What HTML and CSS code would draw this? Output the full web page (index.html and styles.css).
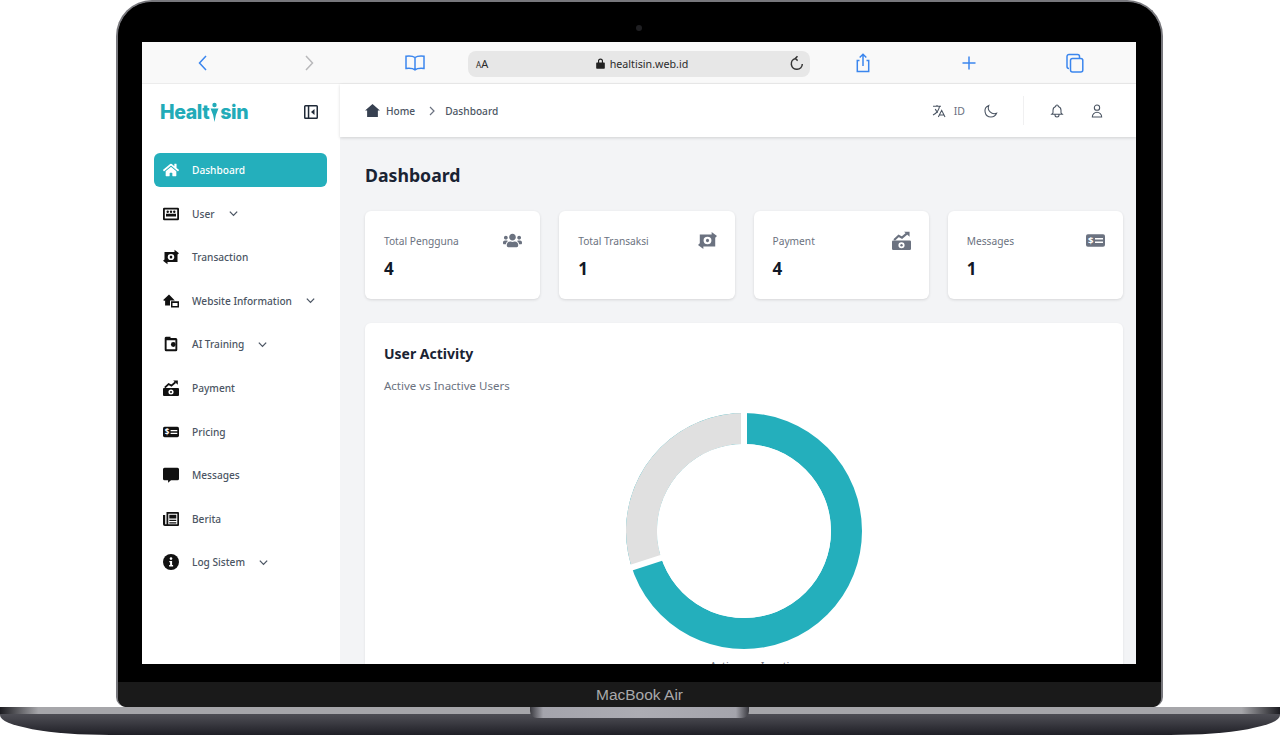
FILE: index.html
```html
<!DOCTYPE html>
<html lang="en">
<head>
    <meta charset="UTF-8">
    <meta name="viewport" content="width=device-width, initial-scale=1.0">
    <title>Healtisin Dashboard</title>
    <link rel="stylesheet" href="styles.css">
</head>
<body>
    <!-- shared icons -->
    <svg class="sprite" aria-hidden="true">
        <symbol id="i-home" viewBox="0 0 576 512"><path d="M280.37 148.26L96 300.11V464a16 16 0 0 0 16 16l112.06-.29a16 16 0 0 0 15.92-16V368a16 16 0 0 1 16-16h64a16 16 0 0 1 16 16v95.64a16 16 0 0 0 16 16.05L464 480a16 16 0 0 0 16-16V300L295.67 148.26a12.19 12.19 0 0 0-15.3 0zM571.6 251.47L488 182.56V44.05a12 12 0 0 0-12-12h-56a12 12 0 0 0-12 12v72.61L318.47 43a48 48 0 0 0-61 0L4.34 251.47a12 12 0 0 0-1.6 16.9l25.5 31A12 12 0 0 0 45.15 301l235.22-193.74a12.19 12.19 0 0 1 15.3 0L530.9 301a12 12 0 0 0 16.9-1.6l25.5-31a12 12 0 0 0-1.7-16.93z"/></symbol>
        <symbol id="i-users" viewBox="0 0 640 512"><path d="M96 224c35.3 0 64-28.7 64-64s-28.7-64-64-64-64 28.7-64 64 28.7 64 64 64zm448 0c35.3 0 64-28.7 64-64s-28.7-64-64-64-64 28.7-64 64 28.7 64 64 64zm32 32h-64c-17.6 0-33.5 7.1-45.1 18.6 40.3 22.1 68.9 62 75.1 109.4h66c17.7 0 32-14.3 32-32v-32c0-35.3-28.7-64-64-64zm-256 0c61.9 0 112-50.1 112-112S381.9 32 320 32 208 82.1 208 144s50.1 112 112 112zm76.8 32h-8.3c-20.8 10-43.9 16-68.5 16s-47.6-6-68.5-16h-8.3C179.6 288 128 339.6 128 403.2V432c0 26.5 21.5 48 48 48h288c26.5 0 48-21.5 48-48v-28.8c0-63.6-51.6-115.2-115.2-115.2zm-223.7-13.4C161.5 263.1 145.6 256 128 256H64c-35.3 0-64 28.7-64 64v32c0 17.7 14.3 32 32 32h65.9c6.3-47.4 34.9-87.3 75.2-109.4z"/></symbol>
        <symbol id="i-roster" viewBox="0 0 16 16"><path fill-rule="evenodd" d="M1.200 1.800h13.600A1.200 1.200 0 0 1 16 3v10a1.200 1.200 0 0 1-1.200 1.200H1.200A1.200 1.200 0 0 1 0 13V3a1.200 1.200 0 0 1 1.200-1.200zm.6 1.800v8.800h12.400V3.600z"/><circle cx="4.700" cy="5.800" r="1.200"/><circle cx="8" cy="5.800" r="1.200"/><circle cx="11.300" cy="5.800" r="1.200"/><path d="M3 7.800h10v2.800H3z"/></symbol>
        <symbol id="i-transfer" viewBox="0 0 16 16"><path fill-rule="evenodd" d="M1.500 3h10V.8L16 4.300l-1.500 1.300V13h-10v2.200L0 11.700l1.500-1.300zM8 4.900a3.300 3.100 0 1 0 0 6.200 3.300 3.100 0 0 0 0-6.200z"/><ellipse cx="8" cy="8" rx="1.300" ry="1.500"/></symbol>
        <symbol id="i-site" viewBox="0 0 16 16"><path fill-rule="evenodd" d="M6 1.500 .2 7l1 1 .9-.8V12.500H7V7.500h4.800zM8 8.300h8V14.500H8zm1.500 1.700v3h5v-3z"/></symbol>
        <symbol id="i-wallet" viewBox="0 0 16 16"><path fill-rule="evenodd" d="M3.500.8h4V2h5.300A1.500 1.500 0 0 1 14.300 3.500v10.200a1.500 1.500 0 0 1-1.500 1.500H3.200a1.500 1.500 0 0 1-1.500-1.500V2.300A1.500 1.500 0 0 1 3.500.8zM3.600 4.200v9.100h8.800V4.200z"/><circle cx="10.300" cy="8.500" r="2.400"/></symbol>
        <symbol id="i-growth" viewBox="0 0 16 16"><path d="M1.800 7.600 5.600 4l2.800 1.600 4-3.400" fill="none" stroke="currentColor" stroke-width="1.800"/><path d="M10.200.6h4.600v4.200z"/><path fill-rule="evenodd" d="M1 8h14a1 1 0 0 1 1 1v6a1 1 0 0 1-1 1H1a1 1 0 0 1-1-1V9a1 1 0 0 1 1-1zm7 1.500a2.600 2.500 0 1 0 0 5 2.600 2.500 0 0 0 0-5z"/><circle cx="8" cy="12" r="1"/></symbol>
        <symbol id="i-bill" viewBox="0 0 16 16"><rect y="2.800" width="16" height="10.400" rx="1.600"/><text x="1.700" y="10.800" class="bill-sign">$</text><path d="M7.600 5.900h6.700v1.300H7.600zm0 2.900h6.700v1.300H7.600z" fill="#fff"/></symbol>
        <symbol id="i-message" viewBox="0 0 16 16"><path d="M1.500.8h13A1.500 1.500 0 0 1 16 2.300v9.400a1.500 1.500 0 0 1-1.500 1.500H8l-2.900 2.600v-2.600H1.500A1.500 1.500 0 0 1 0 11.700V2.300A1.500 1.500 0 0 1 1.500.8z"/></symbol>
        <symbol id="i-news" viewBox="0 0 16 16"><path fill-rule="evenodd" d="M3.500 1H15a1 1 0 0 1 1 1v12a1 1 0 0 1-1 1H1.800A1.800 1.800 0 0 1 0 13.200V4h2.200v9.200h1.300zM5.300 2.800v10.400h9V2.800z"/><path d="M6.300 3.800h7v3.700h-7zm0 4.900h7V10h-7zm0 2.500h7v1.200h-7z"/></symbol>
        <symbol id="i-info" viewBox="0 0 16 16"><circle cx="8" cy="8" r="8"/><circle cx="8" cy="4.600" r="1.300" fill="#fff"/><path d="M6.300 6.900h2.800v4.200h1v1.300H6.100v-1.300h1V8.200h-.8z" fill="#fff"/></symbol>
        <symbol id="i-chevron" viewBox="0 0 12 12"><path d="M2 4l4 4 4-4" fill="none" stroke="currentColor" stroke-width="1.400"/></symbol>
    </svg>

    <div class="lid">
        <div class="bezel">
            <div class="camera"></div>
            <div class="screen">
                <div class="safari">
                    <div class="slot"><svg class="tool" viewBox="0 0 20 20"><path d="M13 3 6.500 10l6.500 7"/></svg></div>
                    <div class="slot slot-off"><svg class="tool" viewBox="0 0 20 20"><path d="M7 3l6.500 7L7 17"/></svg></div>
                    <div class="slot"><svg class="tool tool-wide" viewBox="0 0 20 18"><path d="M10 3.500C8 2 5 1.800 1 2.200v12.300c4-.4 7-.2 9 1.300 2-1.500 5-1.700 9-1.300V2.200C15 1.800 12 2 10 3.500zm0 0v12.300"/></svg></div>
                    <div class="url">
                        <span class="url-aa"><small>A</small>A</span>
                        <span class="url-site">
                            <svg class="lock" viewBox="0 0 10 12"><path d="M2.200 5V3.300a2.800 2.800 0 0 1 5.600 0V5H9a.8.8 0 0 1 .8.800v5.200a.8.8 0 0 1-.8.800H1a.8.8 0 0 1-.8-.8V5.800A.8.8 0 0 1 1 5zm1.300 0h3V3.300a1.500 1.500 0 0 0-3 0z"/></svg>
                            healtisin.web.id
                        </span>
                        <svg class="reload" viewBox="0 0 16 16"><path d="M8.500.8 6.300 3l2.400 2.100M6.500 3a5.500 5.500 0 1 0 6.800 5.500"/></svg>
                    </div>
                    <div class="slot"><svg class="tool" viewBox="0 0 20 20"><path d="M6.500 7.500H4.300v11h11.400v-11h-2.200M10 13V1.500M6.700 4.500 10 1.300l3.300 3.200"/></svg></div>
                    <div class="slot"><svg class="tool" viewBox="0 0 20 20"><path d="M10 3.500v13M3.500 10h13"/></svg></div>
                    <div class="slot"><svg class="tool" viewBox="0 0 20 20"><path d="M7.500 5.500h8.300a2 2 0 0 1 2 2V17a2 2 0 0 1-2 2H7.500a2 2 0 0 1-2-2V7.500a2 2 0 0 1 2-2zM4 15.500a2 2 0 0 1-2-2V3.500a2 2 0 0 1 2-2h8.500a2 2 0 0 1 2 2v2"/></svg></div>
                </div>

                <div class="app">
                    <aside class="sidebar">
                        <div class="brand">
                            <div class="logo">Healt<svg class="logo-i" viewBox="0 0 8 20"><circle cx="4" cy="3" r="2.200"/><path d="M0 6.500h8L5.400 13 4 20 2.600 13z"/></svg>sin</div>
                            <svg class="collapse" viewBox="0 0 14 14"><path fill-rule="evenodd" d="M1.500 0h11A1.500 1.500 0 0 1 14 1.500v11a1.500 1.500 0 0 1-1.500 1.500h-11A1.500 1.500 0 0 1 0 12.500v-11A1.500 1.500 0 0 1 1.500 0zm0 1.500v11h2.300v-11zm3.800 0v11h7.200v-11z"/><path d="M10.500 4v6L7 7z"/></svg>
                        </div>
                        <nav class="menu">
                            <a class="item item-active"><svg class="ico"><use href="#i-home"/></svg>Dashboard</a>
                            <a class="item"><svg class="ico"><use href="#i-roster"/></svg>User<svg class="caret"><use href="#i-chevron"/></svg></a>
                            <a class="item"><svg class="ico"><use href="#i-transfer"/></svg>Transaction</a>
                            <a class="item"><svg class="ico"><use href="#i-site"/></svg>Website Information<svg class="caret"><use href="#i-chevron"/></svg></a>
                            <a class="item"><svg class="ico"><use href="#i-wallet"/></svg>AI Training<svg class="caret"><use href="#i-chevron"/></svg></a>
                            <a class="item"><svg class="ico"><use href="#i-growth"/></svg>Payment</a>
                            <a class="item"><svg class="ico"><use href="#i-bill"/></svg>Pricing</a>
                            <a class="item"><svg class="ico"><use href="#i-message"/></svg>Messages</a>
                            <a class="item"><svg class="ico"><use href="#i-news"/></svg>Berita</a>
                            <a class="item"><svg class="ico"><use href="#i-info"/></svg>Log Sistem<svg class="caret"><use href="#i-chevron"/></svg></a>
                        </nav>
                    </aside>

                    <div class="main">
                        <header class="topbar">
                            <div class="crumbs">
                                <svg class="crumb-home" viewBox="0 0 16 14"><path d="M8 0 0 7h2.200v7h11.600V7H16z"/></svg>
                                <span class="crumb-first">Home</span>
                                <svg class="crumb-sep" viewBox="0 0 8 10"><path d="M2 1l4 4-4 4"/></svg>
                                <span>Dashboard</span>
                            </div>
                            <div class="actions">
                                <svg class="act" viewBox="0 0 24 24"><path d="M3 5h12M9 3v2m1.048 9.500A18.022 18.022 0 016.412 9m6.088 9h7M11 21l5-10 5 10M12.751 5C11.783 10.770 8.070 15.610 3 18.129"/></svg>
                                <span class="lang">ID</span>
                                <svg class="act act-moon" viewBox="0 0 24 24"><path d="M20.354 15.354A9 9 0 018.646 3.646 9.003 9.003 0 0012 21a9.003 9.003 0 008.354-5.646z"/></svg>
                                <span class="act-line"></span>
                                <svg class="act" viewBox="0 0 24 24"><path d="M15 17h5l-1.405-1.405A2.032 2.032 0 0118 14.158V11a6.002 6.002 0 00-4-5.659V5a2 2 0 10-4 0v.341C7.670 6.165 6 8.388 6 11v3.159c0 .538-.214 1.055-.595 1.436L4 17h5m6 0v1a3 3 0 11-6 0v-1m6 0H9"/></svg>
                                <svg class="act act-user" viewBox="0 0 24 24"><path d="M16 7a4 4 0 11-8 0 4 4 0 018 0zM12 14a7 7 0 00-7 7h14a7 7 0 00-7-7z"/></svg>
                            </div>
                        </header>

                        <div class="content">
                            <h1>Dashboard</h1>
                            <div class="stats">
                                <div class="stat">
                                    <div class="stat-top"><span>Total Pengguna</span><svg class="stat-ico"><use href="#i-users"/></svg></div>
                                    <div class="stat-num">4</div>
                                </div>
                                <div class="stat">
                                    <div class="stat-top"><span>Total Transaksi</span><svg class="stat-ico"><use href="#i-transfer"/></svg></div>
                                    <div class="stat-num">1</div>
                                </div>
                                <div class="stat">
                                    <div class="stat-top"><span>Payment</span><svg class="stat-ico"><use href="#i-growth"/></svg></div>
                                    <div class="stat-num">4</div>
                                </div>
                                <div class="stat">
                                    <div class="stat-top"><span>Messages</span><svg class="stat-ico"><use href="#i-bill"/></svg></div>
                                    <div class="stat-num">1</div>
                                </div>
                            </div>

                            <section class="activity">
                                <h2>User Activity</h2>
                                <p>Active vs Inactive Users</p>
                                <svg class="donut" viewBox="0 0 236 236">
                                    <circle cx="118" cy="118" r="102.500" class="ring-active"/>
                                    <circle cx="118" cy="118" r="102.500" class="ring-idle" pathLength="100" stroke-dasharray="30 70" transform="rotate(162 118 118)"/>
                                    <path d="M118 118V0M118 118 3 155.400" class="ring-gap"/>
                                    <circle cx="118" cy="118" r="87" class="ring-hole"/>
                                </svg>
                                <div class="legend"><span>Active</span><span>Inactive</span></div>
                            </section>
                        </div>
                    </div>
                </div>
            </div>
        </div>
        <div class="chin">MacBook Air</div>
    </div>

    <div class="base">
        <div class="base-strip"><div class="notch"></div></div>
    </div>
</body>
</html>
```

FILE: styles.css
```css
* {
    box-sizing: border-box;
}
html, body {
    margin: 0;
    height: 735px;
    overflow: hidden;
}
body {
    background: #fff;
    font-family: "Noto Sans", Arial, sans-serif;
    color: #111827;
}
.sprite {
    display: none;
}

/* laptop frame */
.lid {
    width: 1047px;
    height: 707px;
    margin-left: 116px;
    border: 2px solid #77777c;
    border-bottom: 0;
    border-radius: 36px 36px 10px 10px;
    background: #000;
    overflow: hidden;
    display: flex;
    flex-direction: column;
}
.bezel {
    flex: 1;
    padding: 40px 25px 18px 24px;
    background: #000;
    min-height: 0;
    display: flex;
    flex-direction: column;
}
.camera {
    width: 6px;
    height: 6px;
    margin: -17px auto 11px;
    border-radius: 50%;
    background: #1f1f22;
}
.screen {
    height: 622px;
    background: #fff;
    overflow: hidden;
    display: flex;
    flex-direction: column;
}
.chin {
    height: 25px;
    background: #1a1a1a;
    color: #a9a9ab;
    font-family: "Liberation Sans", Arial, sans-serif;
    font-size: 15.5px;
    line-height: 25px;
    text-align: center;
}
.base {
    height: 28px;
    background: linear-gradient(#5a5a61, #46464d 40%, #1f1f26);
    border-radius: 0 0 110px 110px / 0 0 20px 20px;
}
.base-strip {
    height: 7px;
    background:
        linear-gradient(90deg, rgba(20,20,25,.95), rgba(20,20,25,0) 3%, rgba(20,20,25,0) 97%, rgba(20,20,25,.95)),
        #a6a6aa;
    display: flex;
    justify-content: center;
}
.notch {
    width: 219px;
    height: 11px;
    margin-left: -1px;
    border-radius: 0 0 7px 7px;
    background: linear-gradient(90deg, #3a3a40, #a4a4ac 6%, #acacb3 50%, #a4a4ac 94%, #3a3a40);
}

/* browser toolbar */
.safari {
    height: 42px;
    flex: none;
    padding-left: 8px;
    background: #f9f9f9;
    border-bottom: 1px solid #ececec;
    display: grid;
    grid-template-columns: 106px 106px 106px 342px 106px 106px 106px;
    align-items: center;
}
.slot {
    display: flex;
    justify-content: center;
    color: #3b86ee;
}
.slot-off {
    color: #b9b9bb;
}
.tool {
    width: 20px;
    height: 20px;
    fill: none;
    stroke: currentColor;
    stroke-width: 1.5;
}
.tool-wide {
    height: 18px;
}
.url {
    height: 26px;
    margin-top: 2px;
    padding: 0 5px 0 8px;
    border-radius: 8px;
    background: #e7e7e7;
    color: #2b2b2b;
    font-size: 12px;
    display: flex;
    align-items: center;
    justify-content: space-between;
}
.url-aa {
    font-size: 11px;
    width: 14px;
}
.url-aa small {
    font-size: 8px;
}
.url-site {
    display: flex;
    align-items: center;
    gap: 5px;
    margin-left: 5px;
    font-size: 10.700px;
}
.lock {
    width: 9px;
    height: 11px;
    fill: #222;
}
.reload {
    width: 16px;
    height: 17px;
    fill: none;
    stroke: #333;
    stroke-width: 1.500;
}

/* app shell */
.app {
    flex: 1;
    min-height: 0;
    display: flex;
}
.sidebar {
    width: 198px;
    flex: none;
    padding: 0 13px 0 12px;
    background: #fff;
}
.brand {
    height: 56px;
    padding: 0 9px 0 6px;
    display: flex;
    align-items: center;
    justify-content: space-between;
}
.logo {
    color: #22abb8;
    font-family: Inter, sans-serif;
    font-size: 19.500px;
    font-weight: 800;
    letter-spacing: -.4px;
    display: flex;
    align-items: center;
}
.logo-i {
    width: 9px;
    height: 20px;
    margin: 0 1px;
    fill: #22abb8;
}
.collapse {
    width: 14px;
    height: 14px;
    fill: #1f2937;
}
.menu {
    margin-top: 13px;
    display: flex;
    flex-direction: column;
    gap: 9.600px;
}
.item {
    height: 34px;
    padding-left: 9px;
    border-radius: 6px;
    color: #4b5563;
    font-size: 10.150px;
    font-weight: 500;
    display: flex;
    align-items: center;
}
.item-active {
    background: #24afbc;
    color: #fff;
}
.ico {
    width: 16px;
    height: 16px;
    margin-right: 13px;
    color: #111;
    fill: currentColor;
}
.item-active .ico {
    color: #fff;
}
.caret {
    width: 11px;
    height: 11px;
    margin-left: 13px;
    color: #4b5563;
    fill: currentColor;
}
.bill-sign {
    font: 700 8px "Noto Sans", sans-serif;
    fill: #fff;
}

/* top bar */
.main {
    flex: 1;
    min-width: 0;
    background: #f3f4f6;
    display: flex;
    flex-direction: column;
}
.topbar {
    height: 53px;
    flex: none;
    padding: 0 31px 0 25px;
    background: #fff;
    box-shadow: 0 1px 3px rgba(0,0,0,.15);
    display: flex;
    align-items: center;
    justify-content: space-between;
}
.crumbs {
    color: #4b5563;
    font-size: 10.150px;
    font-weight: 500;
    display: flex;
    align-items: center;
}
.crumb-home {
    width: 15px;
    height: 13px;
    margin-right: 6px;
    fill: #374151;
}
.crumb-sep {
    width: 8px;
    height: 10px;
    margin: 0 9px 0 13px;
    fill: none;
    stroke: #6b7280;
    stroke-width: 1.200;
}
.actions {
    color: #4b5563;
    display: flex;
    align-items: center;
}
.act {
    width: 16px;
    height: 16px;
    fill: none;
    stroke: currentColor;
    stroke-width: 1.600;
}
.act-moon {
    margin-left: 18px;
}
.act-user {
    margin-left: 24px;
}
.lang {
    margin-left: 7px;
    font-size: 10.500px;
    color: #6b7280;
}
.act-line {
    width: 1px;
    height: 29px;
    margin: 0 25px 0 24px;
    background: #f0f0f1;
}

/* page body */
.content {
    flex: 1;
    min-height: 0;
    padding: 25px 13px 0 25px;
}
h1 {
    margin: 0;
    height: 26px;
    font-size: 17.700px;
    font-weight: 700;
    line-height: 26px;
    color: #1a2333;
}
.stats {
    margin-top: 23px;
    display: grid;
    grid-template-columns: repeat(4, 1fr);
    gap: 19px;
}
.stat {
    height: 88px;
    padding: 20px 18px 20px 19px;
    background: #fff;
    border-radius: 6px;
    box-shadow: 0 1px 3px rgba(0,0,0,.12);
}
.stat-top {
    height: 19px;
    color: #6b7280;
    font-size: 10.200px;
    display: flex;
    align-items: center;
    justify-content: space-between;
}
.stat-ico {
    width: 19px;
    height: 19px;
    fill: #6b7280;
    color: #6b7280;
}
.stat-num {
    margin-top: 7px;
    font-size: 17px;
    font-weight: 700;
    color: #111827;
}
.activity {
    margin-top: 24px;
    padding: 21px 19px;
    height: 360px;
    background: #fff;
    border-radius: 6px;
    box-shadow: 0 1px 3px rgba(0,0,0,.08);
}
h2 {
    margin: 0;
    font-size: 14px;
    font-weight: 700;
    line-height: 20px;
    color: #1a2333;
}
.activity p {
    margin: 14px 0 0;
    color: #6b7280;
    font-size: 11.500px;
    line-height: 16px;
}
.donut {
    display: block;
    width: 236px;
    height: 236px;
    margin: 19px auto 0;
}
.ring-active, .ring-idle {
    fill: none;
    stroke-width: 31;
}
.ring-active {
    stroke: #24afbc;
}
.ring-idle {
    stroke: #e0e0e0;
}
.ring-gap {
    fill: none;
    stroke: #fff;
    stroke-width: 6;
}
.ring-hole {
    fill: #fff;
}
.legend {
    margin-top: 9px;
    padding-left: 23px;
    color: #6b7280;
    font-size: 11px;
    display: flex;
    justify-content: center;
    gap: 20px;
}
```
